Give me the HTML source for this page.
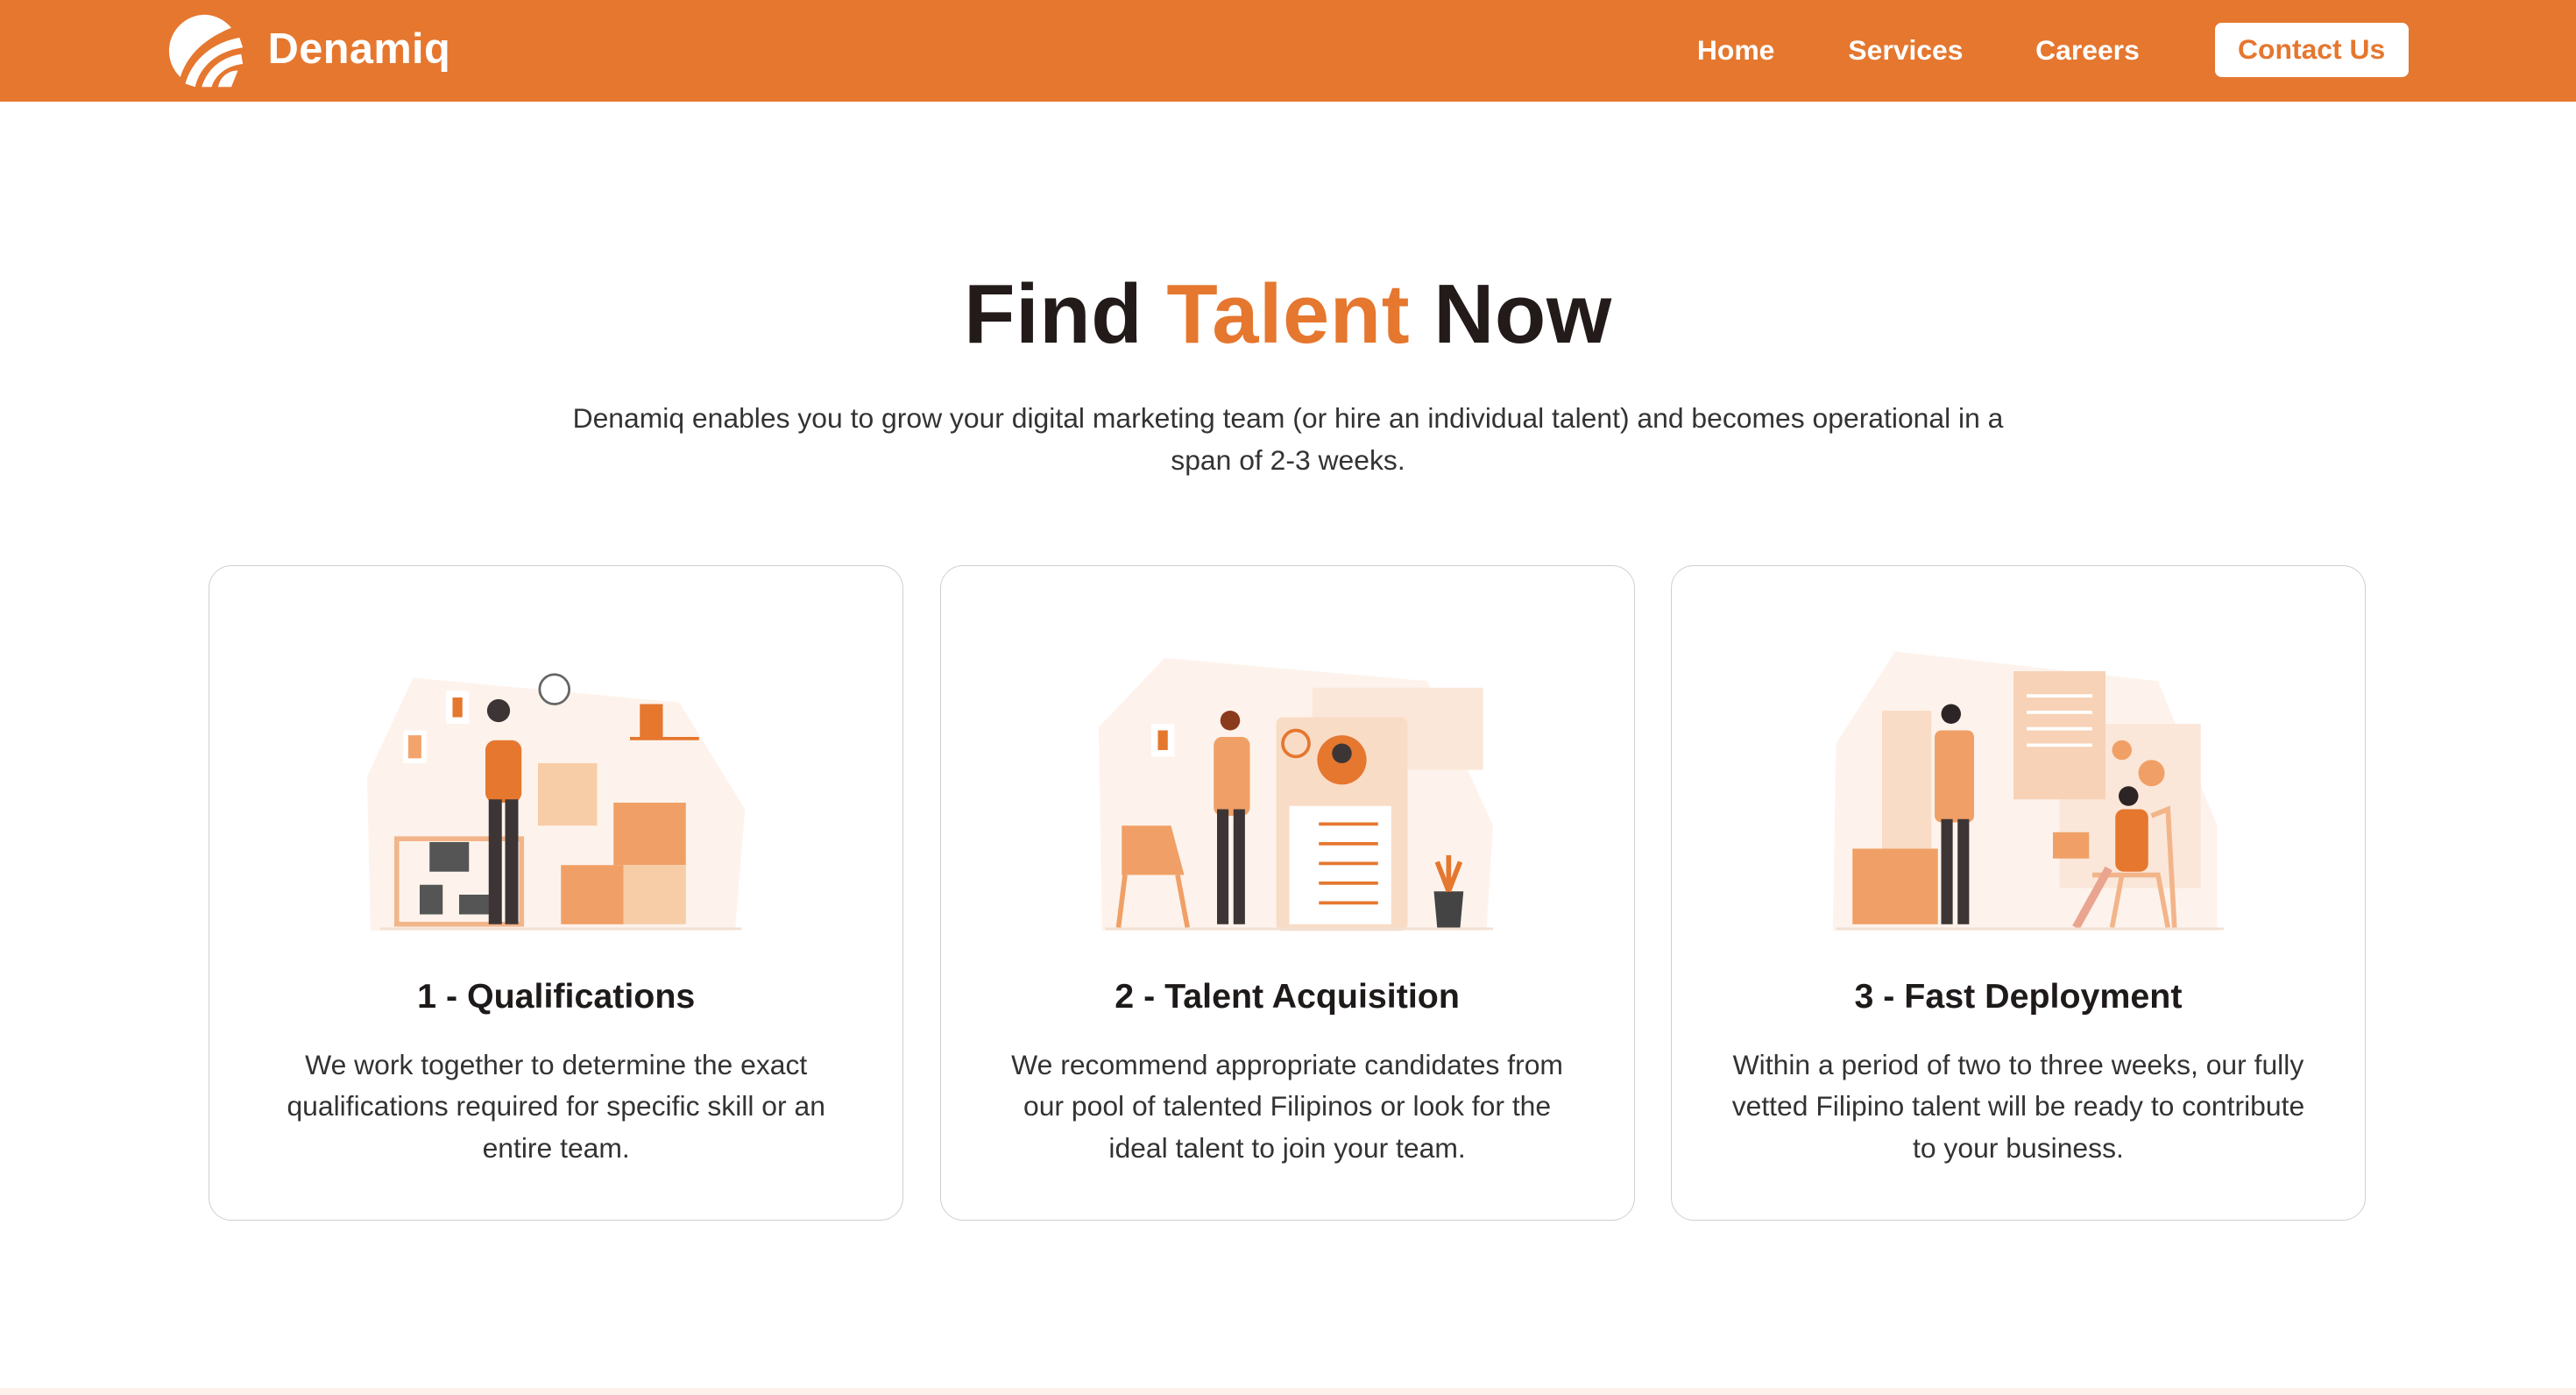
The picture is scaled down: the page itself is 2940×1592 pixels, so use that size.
<!DOCTYPE html>
<html><head><meta charset="utf-8"><style>
*{margin:0;padding:0;box-sizing:border-box}
html,body{width:2940px;height:1592px;overflow:hidden;background:#fff}
#w{zoom:1.875;width:1568px;height:849px;position:relative;font-family:"Liberation Sans",sans-serif;color:#222}
header{position:absolute;left:0;top:0;width:1568px;height:62px;background:#E5772F}
.logo{position:absolute;left:101px;top:7px}
.brand{position:absolute;left:163px;top:15px;color:#fff;font-weight:bold;font-size:26px;letter-spacing:0.2px}
.nav{position:absolute;top:21px;color:#fff;font-weight:bold;font-size:17px}
.btn{position:absolute;left:1348px;top:14px;width:118px;height:33px;background:#fff;border-radius:4px;color:#E5772F;font-weight:bold;font-size:17px;text-align:center;line-height:33px}
h1{position:absolute;left:0;width:1568px;top:162px;text-align:center;font-size:51px;font-weight:bold;color:#231a1a;letter-spacing:0.3px}
h1 span{color:#E5772F}
.sub{position:absolute;left:334px;width:900px;top:242px;text-align:center;font-size:17px;line-height:25.5px;color:#333}
.card{position:absolute;top:344px;width:423px;height:399px;border:1px solid #cfcfcf;border-radius:14px;text-align:center}
.card svg{position:absolute;left:96px;top:48px}
.card h3{position:absolute;top:250px;width:100%;font-size:21px;font-weight:bold;color:#1f1a1a}
.card p{position:absolute;top:291px;left:35px;right:35px;font-size:17px;line-height:25.5px;color:#333}
.foot{position:absolute;left:0;top:845px;width:1568px;height:4px;background:#fdf1ea}
</style></head><body><div id="w">
<header>
<svg class="logo" width="50" height="48" viewBox="0 0 50 48">
<path d="M24 2 A22 22 0 0 0 9 40 C12 30 20 18 40 10 A22 22 0 0 0 24 2Z" fill="#fff"/>
<path d="M12 44 C16 30 28 19 45 16 L47 22 C32 24 21 33 18 46Z" fill="#fff"/>
<path d="M22 46 C25 36 33 28 46 26 L47 32 C37 33 30 39 28 46Z" fill="#fff"/>
<path d="M32 46 C33 40 38 36 44 36 L40 46Z" fill="#fff"/>
</svg>
<div class="brand">Denamiq</div>
<div class="nav" style="left:1033px">Home</div>
<div class="nav" style="left:1125px">Services</div>
<div class="nav" style="left:1239px">Careers</div>
<div class="btn">Contact Us</div>
</header>
<h1>Find <span>Talent</span> Now</h1>
<div class="sub">Denamiq enables you to grow your digital marketing team (or hire an individual talent) and becomes operational in a span of 2-3 weeks.</div>

<div class="card" style="left:127px">
<svg width="232" height="176" viewBox="0 0 232 176">
<path d="M28 20 L190 35 L230 100 L224 174 L2 174 L0 80Z" fill="#fdf3ec"/>
<circle cx="114" cy="27" r="9" fill="#fff" stroke="#666" stroke-width="1.5"/>
<rect x="48" y="28" width="14" height="20" fill="#fff"/><rect x="52" y="32" width="6" height="12" fill="#E5772F"/>
<rect x="22" y="52" width="14" height="20" fill="#fff"/><rect x="25" y="55" width="8" height="14" fill="#f2a46c"/>
<rect x="166" y="36" width="14" height="20" fill="#E5772F"/><rect x="160" y="56" width="42" height="2" fill="#E5772F"/>
<rect x="18" y="118" width="76" height="52" fill="none" stroke="#f2b58a" stroke-width="3"/>
<rect x="38" y="120" width="24" height="18" fill="#555"/><rect x="32" y="146" width="14" height="18" fill="#555"/><rect x="56" y="152" width="22" height="12" fill="#555"/>
<circle cx="80" cy="40" r="7" fill="#3d3535"/>
<rect x="72" y="58" width="22" height="38" rx="6" fill="#E5772F"/>
<rect x="74" y="94" width="8" height="76" fill="#3d3535"/><rect x="84" y="94" width="8" height="76" fill="#3d3535"/>
<rect x="104" y="72" width="36" height="38" fill="#f7cda8"/>
<rect x="150" y="96" width="44" height="38" fill="#f0a066"/>
<rect x="118" y="134" width="38" height="36" fill="#f0a066"/>
<rect x="156" y="134" width="38" height="36" fill="#f7cda8"/>
<rect x="8" y="172" width="220" height="1.5" fill="#f2e0d4"/>
</svg>
<h3>1 - Qualifications</h3>
<p>We work together to determine the exact qualifications required for specific skill or an entire team.</p>
</div>

<div class="card" style="left:572px">
<svg width="244" height="176" viewBox="0 0 244 176">
<path d="M40 8 L200 22 L240 110 L236 174 L2 174 L0 50Z" fill="#fdf3ec"/>
<rect x="130" y="26" width="104" height="50" fill="#fbe7d9"/>
<rect x="108" y="44" width="80" height="130" rx="4" fill="#f9dcc6"/>
<rect x="116" y="98" width="62" height="72" fill="#fff"/>
<circle cx="148" cy="70" r="15" fill="#E5772F"/><circle cx="148" cy="66" r="6" fill="#3d3535"/>
<g fill="#E5772F"><rect x="134" y="108" width="36" height="2"/><rect x="134" y="120" width="36" height="2"/><rect x="134" y="132" width="36" height="2"/><rect x="134" y="144" width="36" height="2"/><rect x="134" y="156" width="36" height="2"/></g>
<circle cx="120" cy="60" r="8" fill="none" stroke="#E5772F" stroke-width="2"/>
<circle cx="80" cy="46" r="6" fill="#8a3b1c"/>
<rect x="70" y="56" width="22" height="48" rx="5" fill="#f0a066"/>
<rect x="72" y="100" width="7" height="70" fill="#3d3535"/><rect x="82" y="100" width="7" height="70" fill="#3d3535"/>
<rect x="32" y="48" width="14" height="20" fill="#fff"/><rect x="36" y="52" width="6" height="12" fill="#E5772F"/>
<path d="M14 110 L44 110 L52 140 L14 140Z" fill="#f0a066"/><path d="M16 140 L12 172 M48 140 L54 172" stroke="#f0a066" stroke-width="3"/>
<path d="M204 150 L222 150 L220 172 L206 172Z" fill="#444"/><path d="M213 150 L206 132 M213 150 L213 128 M213 150 L220 132" stroke="#E5772F" stroke-width="3"/>
<rect x="4" y="172" width="236" height="1.5" fill="#f2e0d4"/>
</svg>
<h3>2 - Talent Acquisition</h3>
<p>We recommend appropriate candidates from our pool of talented Filipinos or look for the ideal talent to join your team.</p>
</div>

<div class="card" style="left:1017px">
<svg width="244" height="176" viewBox="0 0 244 176">
<path d="M40 4 L200 22 L236 110 L236 174 L2 174 L4 60Z" fill="#fdf3ec"/>
<rect x="140" y="48" width="86" height="100" fill="#fbe7d9"/>
<rect x="32" y="40" width="30" height="86" fill="#f9dcc6"/>
<path d="M112 16 L168 16 L168 94 L112 94Z" fill="#f7d2b6"/>
<g fill="#fff"><rect x="120" y="30" width="40" height="2"/><rect x="120" y="40" width="40" height="2"/><rect x="120" y="50" width="40" height="2"/><rect x="120" y="60" width="40" height="2"/></g>
<circle cx="196" cy="78" r="8" fill="#f0a066"/><circle cx="178" cy="64" r="6" fill="#f0a066"/>
<circle cx="74" cy="42" r="6" fill="#2d2525"/>
<rect x="64" y="52" width="24" height="56" rx="4" fill="#f0a066"/>
<rect x="68" y="106" width="7" height="64" fill="#3d3535"/><rect x="78" y="106" width="7" height="64" fill="#3d3535"/>
<rect x="14" y="124" width="52" height="46" fill="#f0a066"/>
<circle cx="182" cy="92" r="6" fill="#2d2525"/>
<rect x="174" y="100" width="20" height="38" rx="5" fill="#E5772F"/>
<rect x="136" y="114" width="22" height="16" fill="#f0a066"/>
<path d="M160 140 L200 140 L206 172 M178 140 L172 172 M196 104 L206 100 L210 172" stroke="#f2b58a" stroke-width="3" fill="none"/>
<path d="M170 136 L150 172" stroke="#e9a590" stroke-width="5"/>
<rect x="4" y="172" width="236" height="1.5" fill="#f2e0d4"/>
</svg>
<h3>3 - Fast Deployment</h3>
<p>Within a period of two to three weeks, our fully vetted Filipino talent will be ready to contribute to your business.</p>
</div>
<div class="foot"></div>
</div></body></html>
